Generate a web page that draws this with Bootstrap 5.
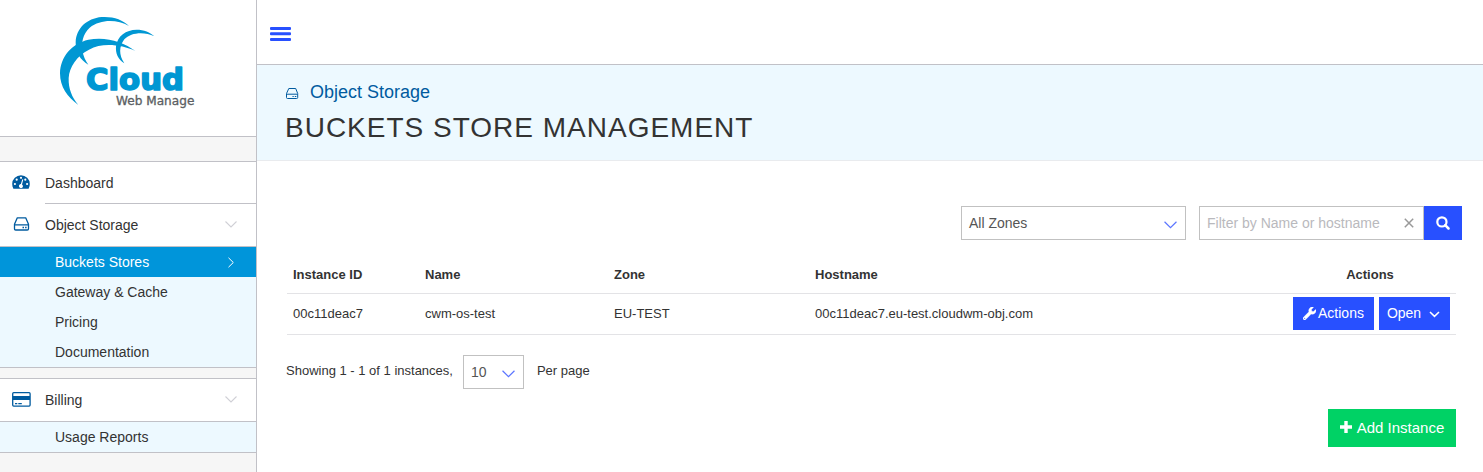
<!DOCTYPE html>
<html lang="en">
<head>
<meta charset="utf-8">
<meta name="viewport" content="width=device-width, initial-scale=1">
<title>Buckets Store Management</title>
<link href="https://cdn.jsdelivr.net/npm/bootstrap@5.3.0/dist/css/bootstrap.min.css" rel="stylesheet">
<style>
body{font-family:"Liberation Sans",Arial,sans-serif;font-size:14px;line-height:20px;color:#333;background:#fff;overflow:hidden}
svg{display:block;flex:none}
a{color:inherit;text-decoration:none}
.side{width:257px;background:#f6f6f6;border-right:1px solid #c1c1c7}
.logo-box{height:137px;border-bottom:1px solid #c1c1c7;padding:5px 0 0 50px}
.menu-group{border-top:1px solid #c1c1c7;border-bottom:1px solid #c1c1c7}
.menu-item{height:42px;padding:0 19px 0 12px}
.menu-item .ico{width:33px;color:#005b9f}
.menu-item .ico svg{margin-top:-1px}
.menu-item .ico .drive-ico{margin:-3px 0 0 1px}
.menu-item .chev{color:#d0d0d6;margin-top:-1px}
.rule{height:1px;margin-left:45px;background:#c1c1c7}
.sub{background:#edf9ff;border-top:1px solid #c1c1c7}
.sub a{height:30px;padding:0 21px 0 55px}
.sub a.on{background:#0095da;color:#fff}
.topbar{height:65px;border-bottom:1px solid #c1c1c7;padding:3px 0 0 13px}
.title-band{height:96px;background:#edf9ff;border-bottom:1px solid #e9ebee;padding:15px 0 0 28px}
.crumb{font-size:18px;line-height:24px;color:#005b9f}
.crumb svg{margin:2px 0 0 1px}
h1{font-size:28px;line-height:34px;letter-spacing:1px;color:#333;font-weight:400;margin:7px 0 0}
.content-box{padding:45px 21px 0 29px}
.field{height:34px;border:1px solid #c1c1c1;padding:0 8px 0 7px;color:#555;background:#fff}
.field svg{margin-top:3px}
.zones{width:225px;margin-right:13px}
.search{width:225px;color:#b9b9bd}
.search svg{margin:0 1px 0 0}
.per-page{width:61px;margin:0 13px 0 10px;font-size:14px}
.blue,.blue:hover{background:#2850ff;color:#fff}
.search-btn{width:38px;height:34px}
.grid-table{width:1169px;font-size:13px;margin:17px 0 0 1px;table-layout:fixed;border-collapse:separate;border-spacing:0;color:#333}
.grid-table th,.grid-table td{padding:0 0 0 6px;border-bottom:1px solid #e3e3e6}
.grid-table th{height:37px}
.grid-table td{height:41px}
.grid-table .act-head{padding:0}
.row-actions{margin-right:6px;padding-bottom:1px}
.act{height:33px;font-size:14px}
.foot{font-size:13px;margin-top:20px}
.add,.add:hover{background:#00d265;color:#fff;width:128px;height:38px;font-size:15px;margin:20px 6px 0 0}
.add svg{margin-top:-2px}
</style>
</head>
<body>
<svg class="d-none">
<symbol id="drive" viewBox="0 0 16 14"><path d="M3.800.8h8.400L15 7.200v4.600q0 1.200-1.200 1.200H2.200Q1 13 1 11.800V7.200zM1.300 7.900h13.400" fill="none" stroke="currentColor" stroke-width="1.300" stroke-linejoin="round"/><path d="M9 9.800h1.500v1.500H9zM11.600 9.800h1.500v1.500h-1.500z" fill="currentColor"/></symbol>
<symbol id="down" viewBox="0 0 12 7"><path d="M.5.5 6 6 11.5.5" fill="none" stroke="currentColor" stroke-width="1.100"/></symbol>
</svg>
<div class="d-flex vh-100">
<aside class="side flex-shrink-0">
  <div class="logo-box bg-white">
    <svg width="160" height="115" viewBox="0 0 480 345" role="img" aria-label="Cloud Web Manage">
      <g fill="#0097d3">
        <path d="M85 300C52 276 30 246 30 205C31 155 65 116 115 104C168 94 220 110 256 138C214 119 157 112 117 134C80 153 58 186 56 219C55 251 66 277 85 300Z"/>
        <path d="M237 63C201 42 151 42 119 68C98 87 94 113 97 137C100 153 106 166 115 179C91 165 76 142 77 111C79 70 110 40 155 36C190 34 218 44 237 63Z"/>
        <path d="M313 94C283 79 242 82 223 103C207 124 206 150 223 175C204 164 196 145 198 124C202 93 228 74 260 74C281 74 301 82 313 94Z"/>
      </g>
      <text x="108" y="256" font-family="DejaVu Sans" font-weight="700" font-size="90" textLength="294" lengthAdjust="spacingAndGlyphs" fill="#0097d3" stroke="#0097d3" stroke-width="5" stroke-linejoin="round">Cloud</text>
      <text x="198" y="301" font-family="DejaVu Sans" font-size="37" textLength="235" lengthAdjust="spacingAndGlyphs" fill="#5c5f63" stroke="#5c5f63" stroke-width="1">Web Manage</text>
    </svg>
  </div>
  <nav>
    <div class="menu-group bg-white mt-4">
      <a href="#" class="menu-item d-flex align-items-center" style="height:41px"><span class="ico"><svg width="18" height="14" viewBox="0 0 18 14"><path d="M9 .3A8.800 8.800 0 0 0 .2 9c0 1.700.4 3.300 1.200 4.700h15.200A9.200 9.200 0 0 0 17.800 9 8.800 8.800 0 0 0 9 .3z" fill="currentColor"/><g fill="#fff"><circle cx="2.900" cy="9" r="1.100"/><circle cx="4.700" cy="4.700" r="1.100"/><circle cx="9" cy="2.800" r="1.100"/><circle cx="13.300" cy="4.700" r="1.100"/><circle cx="15.100" cy="9" r="1.100"/><path d="m10.300 4.300 1 .3-1.300 4.800a2 2 0 1 1-1.100-.3z"/></g></svg></span>Dashboard</a>
      <div class="rule"></div>
      <a href="#" class="menu-item d-flex align-items-center"><span class="ico"><svg class="drive-ico" width="17" height="14"><use href="#drive"/></svg></span>Object Storage<svg class="chev ms-auto" width="12" height="7"><use href="#down"/></svg></a>
      <div class="sub">
        <a href="#" class="on d-flex align-items-center">Buckets Stores<svg class="ms-auto" width="8" height="11" viewBox="0 0 8 11"><path d="M1.500.8 6.300 5.500 1.500 10.200" fill="none" stroke="#fff"/></svg></a>
        <a href="#" class="d-flex align-items-center">Gateway &amp; Cache</a>
        <a href="#" class="d-flex align-items-center">Pricing</a>
        <a href="#" class="d-flex align-items-center">Documentation</a>
      </div>
    </div>
    <div class="menu-group bg-white" style="margin-top:10px">
      <a href="#" class="menu-item d-flex align-items-center"><span class="ico"><svg width="19" height="15" viewBox="0 0 19 15"><rect x=".7" y=".7" width="17.400" height="13.400" rx="1" fill="none" stroke="currentColor" stroke-width="1.300"/><path d="M1 4h17v4H1zM3 11h2.300v1.200H3zM6.300 11h3.500v1.200H6.300z" fill="currentColor"/></svg></span>Billing<svg class="chev ms-auto" width="12" height="7"><use href="#down"/></svg></a>
      <div class="sub"><a href="#" class="d-flex align-items-center">Usage Reports</a></div>
    </div>
  </nav>
</aside>
<main class="flex-grow-1">
  <header class="topbar d-flex align-items-center"><svg width="21" height="14" viewBox="0 0 21 14" fill="#2850ff"><rect width="21" height="3" rx="1"/><rect y="5.200" width="21" height="3" rx="1"/><rect y="11" width="21" height="3" rx="1"/></svg></header>
  <section class="title-band">
    <div class="crumb d-flex align-items-center"><svg width="13" height="11" viewBox="0 0 13 11"><path d="M2.800.5h6.900L11.700 5.500v4q0 1-1 1H1.500q-1 0-1-1v-4zM.8 6.200h10.700" fill="none" stroke="currentColor" stroke-linejoin="round"/><path d="M6.500 8h1.200v1H6.500zM8.800 8h1.500v1H8.800z" fill="currentColor"/></svg><span style="margin-left:11px">Object Storage</span></div>
    <h1>BUCKETS STORE MANAGEMENT</h1>
  </section>
  <section class="content-box">
    <div class="d-flex justify-content-end">
      <div class="field zones d-flex align-items-center justify-content-between">All Zones<svg width="13" height="8" color="#5b75ff"><use href="#down"/></svg></div>
      <div class="d-flex">
        <div class="field search d-flex align-items-center justify-content-between">Filter by Name or hostname<svg width="10" height="10" viewBox="0 0 10 10"><path d="m.8.8 8.400 8.400M9.200.8.8 9.200" stroke="#999" stroke-width="1.500"/></svg></div>
        <button class="btn blue search-btn rounded-0 border-0 p-0 d-flex align-items-center justify-content-center" aria-label="Search"><svg width="14" height="14" viewBox="0 0 14 14"><circle cx="5.900" cy="5.900" r="4.600" fill="none" stroke="#fff" stroke-width="2.200"/><path d="m9.200 9.200 3.300 3.300" stroke="#fff" stroke-width="2.500" stroke-linecap="round"/></svg></button>
      </div>
    </div>
    <table class="grid-table">
      <colgroup><col style="width:132px"><col style="width:189px"><col style="width:201px"><col style="width:475px"><col></colgroup>
      <thead><tr><th>Instance ID</th><th>Name</th><th>Zone</th><th>Hostname</th><th class="act-head text-center">Actions</th></tr></thead>
      <tbody><tr><td>00c11deac7</td><td>cwm-os-test</td><td>EU-TEST</td><td>00c11deac7.eu-test.cloudwm-obj.com</td>
      <td><div class="row-actions d-flex justify-content-end">
        <button class="btn blue act rounded-0 border-0 p-0 d-flex align-items-center justify-content-center" style="width:81px;margin-right:5px"><svg width="13" height="13" viewBox="0 0 512 512" fill="#fff"><path d="M507.700 109a12 12 0 0 0-20-5.600L413.300 177.800l-67.900-11.300-11.300-67.900 74.400-74.400a12 12 0 0 0-5.700-20.200A143.800 143.800 0 0 0 232.200 189.600L18.700 402.800a64 64 0 0 0 90.500 90.500l213.200-213.200A144 144 0 0 0 507.700 109zM64 472a24 24 0 1 1 0-48 24 24 0 0 1 0 48z" stroke="#fff" stroke-width="12"/></svg><span style="margin-left:2px">Actions</span></button>
        <button class="btn blue act rounded-0 border-0 p-0 pe-1 d-flex align-items-center justify-content-center" style="width:71px"><span style="margin-left:2px">Open</span><svg class="ms-2" width="11" height="7" viewBox="0 0 11 7" style="margin-top:2px"><path d="M1 1l4.500 4.400L10 1" fill="none" stroke="#fff" stroke-width="1.500"/></svg></button>
      </div></td></tr></tbody>
    </table>
    <div class="foot d-flex align-items-center"><span style="padding-bottom:2px">Showing 1 - 1 of 1 instances,</span>
      <div class="field per-page d-flex align-items-center justify-content-between">10<svg width="13" height="8" color="#5b75ff"><use href="#down"/></svg></div><span style="padding-bottom:2px">Per page</span></div>
    <button class="btn add rounded-0 border-0 p-0 ms-auto d-flex align-items-center justify-content-center"><svg width="12" height="12" viewBox="0 0 12 12"><path d="M4.300 0h3.400v4.300H12v3.400H7.700V12H4.300V7.700H0V4.300h4.300z" fill="#fff"/></svg><span style="margin-left:5px">Add Instance</span></button>
  </section>
</main>
</div>
<script src="https://cdn.jsdelivr.net/npm/bootstrap@5.3.0/dist/js/bootstrap.bundle.min.js"></script>
</body>
</html>
